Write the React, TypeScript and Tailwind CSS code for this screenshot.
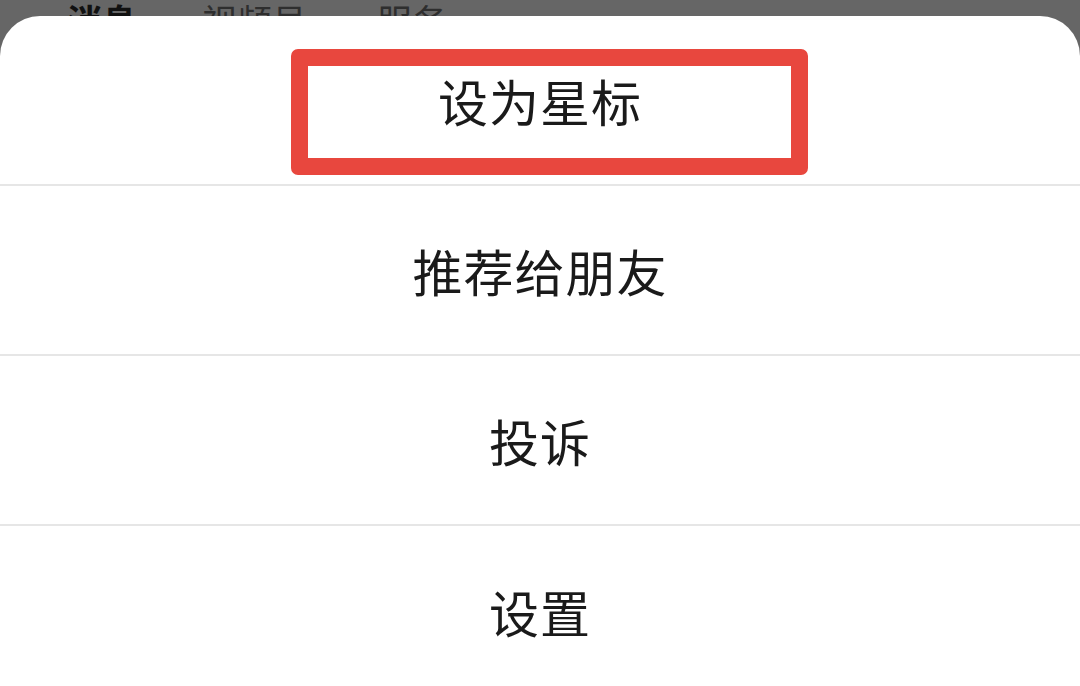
import React from 'react'

const items = ['设为星标', '推荐给朋友', '投诉', '设置']

export default function App() {
  return (
    <div
      className="w-[1080px] h-[686px] bg-[#666666] overflow-hidden flex flex-col"
      style={{ fontFamily: '"Noto Sans CJK SC", "Noto Sans", sans-serif' }}
    >
      {/* tabs behind the sheet, mostly covered */}
      <div className="h-[16px] overflow-hidden shrink-0">
        <div className="flex pt-[2px] pl-[67px] text-[35px] leading-[35px]">
          <span className="text-[#111] font-bold">消息</span>
          <span className="ml-[65px] text-[#2e2e2e]">视频号</span>
          <span className="ml-[70px] text-[#2e2e2e]">服务</span>
        </div>
      </div>

      <div className="flex-1 bg-white rounded-t-[40px] flex flex-col">
        {items.map((label, i) => (
          <div
            key={label}
            className={
              i === 0
                ? 'relative h-[170px] shrink-0 flex items-center justify-center border-b-2 border-[#e6e6e6]'
                : i < items.length - 1
                  ? 'h-[170px] shrink-0 flex items-center justify-center border-b-2 border-[#e6e6e6]'
                  : 'h-[170px] shrink-0 flex items-center justify-center'
            }
          >
            {i === 0 && (
              <div className="absolute left-[291px] top-[33px] w-[517px] h-[126px] border-[17px] border-[#e8473e] rounded-[7px]" />
            )}
            <span className="text-[50px] leading-none text-[#1a1a1a] tracking-[1px]">{label}</span>
          </div>
        ))}
      </div>
    </div>
  )
}
